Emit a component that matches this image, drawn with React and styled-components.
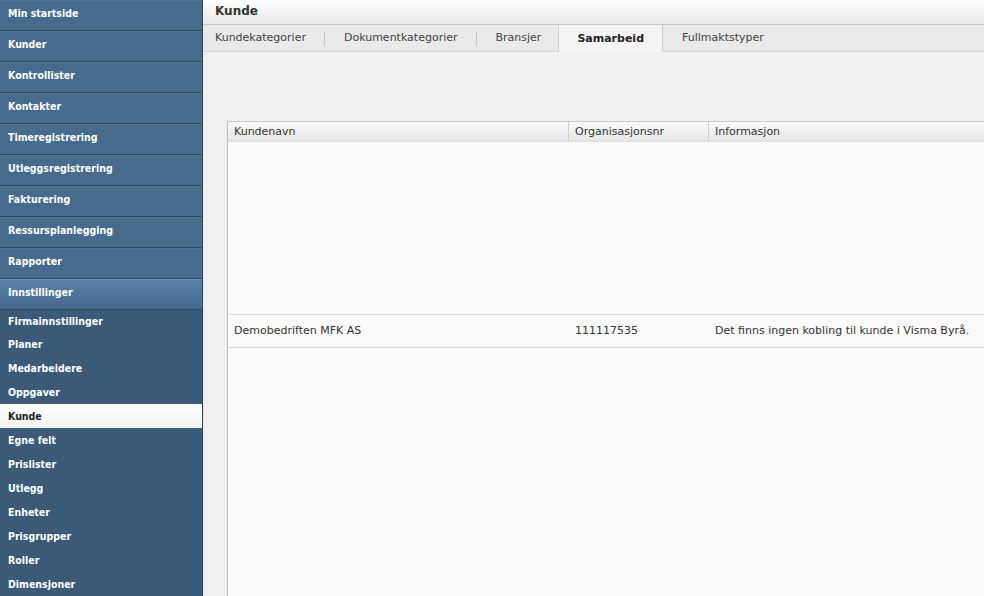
import styled, { createGlobalStyle } from "styled-components"

const GlobalStyle = createGlobalStyle`
  html, body {
    margin: 0;
    padding: 0;
    height: 100%;
    overflow: hidden;
  }
  #root {
    height: 100%;
  }
  * {
    box-sizing: border-box;
  }
`

const mainMenu = [
  "Min startside",
  "Kunder",
  "Kontrollister",
  "Kontakter",
  "Timeregistrering",
  "Utleggsregistrering",
  "Fakturering",
  "Ressursplanlegging",
  "Rapporter",
]

const subMenu = [
  "Firmainnstillinger",
  "Planer",
  "Medarbeidere",
  "Oppgaver",
  "Kunde",
  "Egne felt",
  "Prislister",
  "Utlegg",
  "Enheter",
  "Prisgrupper",
  "Roller",
  "Dimensjoner",
]

const tabs = ["Kundekategorier", "Dokumentkategorier", "Bransjer", "Samarbeid", "Fullmaktstyper"]

export default function App() {
  return (
    <>
      <GlobalStyle />
      <Page>
        <Sidebar>
          {mainMenu.map((item) => (
            <MenuItem key={item}>{item}</MenuItem>
          ))}
          <MenuItem $open>Innstillinger</MenuItem>
          <SubMenu>
            {subMenu.map((item) => (
              <SubItem key={item} $active={item === "Kunde"}>{item}</SubItem>
            ))}
          </SubMenu>
        </Sidebar>
        <Main>
          <TitleBar>Kunde</TitleBar>
          <TabBar>
            {tabs.map((tab, i) => (
              <Tab
                key={tab}
                $active={tab === "Samarbeid"}
                $divider={i < 2}
              >
                {tab}
              </Tab>
            ))}
          </TabBar>
          <Content>
            <Grid>
              <GridHead>
                <HeadCell $w={341}>Kundenavn</HeadCell>
                <HeadCell $w={140}>Organisasjonsnr</HeadCell>
                <HeadCell $last>Informasjon</HeadCell>
              </GridHead>
              <GridBody>
                <EmptySpace />
                <Row>
                  <Cell $w={341}>Demobedriften MFK AS</Cell>
                  <Cell $w={140}>111117535</Cell>
                  <Cell>Det finns ingen kobling til kunde i Visma Byrå.</Cell>
                </Row>
              </GridBody>
            </Grid>
          </Content>
        </Main>
      </Page>
    </>
  )
}

const Page = styled.div`
  display: flex;
  width: 984px;
  height: 596px;
  background: #f0f0f0;
`

const Sidebar = styled.nav`
  width: 203px;
  flex-shrink: 0;
  display: flex;
  flex-direction: column;
  background: #3b5a77;
  border-right: 1px solid #2c4459;
  box-shadow: 1px 0 0 #dfe8ef;
  font-family: "DejaVu Sans Condensed", "DejaVu Sans", sans-serif;
  font-weight: bold;
  font-size: 10.5px;
  color: #ffffff;
  overflow: hidden;
`

const MenuItem = styled.div`
  height: 31px;
  flex-shrink: 0;
  display: flex;
  align-items: center;
  padding: 0 8px 6px;
  background: ${(p) =>
    p.$open
      ? "linear-gradient(#5a80a6, #4d7398 60%, #46698c)"
      : "#476b8d"};
  border-top: 1px solid ${(p) => (p.$open ? "#6e91b3" : "#4f7496")};
  border-bottom: 1px solid #2f4a63;
`

const SubMenu = styled.div`
  display: flex;
  flex-direction: column;
`

const SubItem = styled.div`
  height: 24px;
  flex-shrink: 0;
  display: flex;
  align-items: center;
  padding: 0 8px;
  background: ${(p) => (p.$active ? "linear-gradient(#ffffff, #f2f2f2)" : "transparent")};
  color: ${(p) => (p.$active ? "#222222" : "#ffffff")};
  &:first-child {
    height: 22px;
  }
`

const Main = styled.main`
  flex: 1;
  display: flex;
  flex-direction: column;
  min-width: 0;
  font-family: "DejaVu Sans", Verdana, sans-serif;
  font-size: 11px;
  color: #333333;
`

const TitleBar = styled.div`
  height: 24px;
  flex-shrink: 0;
  display: flex;
  align-items: center;
  padding: 0 0 2px 12px;
  background: linear-gradient(#fdfdfd, #e9e9e9);
  font-weight: bold;
  font-size: 12px;
  color: #333333;
`

const TabBar = styled.div`
  height: 28px;
  flex-shrink: 0;
  display: flex;
  align-items: stretch;
  background: #e9e9ea;
  border-top: 1px solid #c8c8c8;
  border-bottom: 1px solid #d8d8d8;
`

const Tab = styled.div`
  position: relative;
  display: flex;
  align-items: center;
  padding: 0 18px 1px;
  color: ${(p) => (p.$active ? "#222222" : "#444444")};
  font-weight: ${(p) => (p.$active ? "bold" : "normal")};
  background: ${(p) => (p.$active ? "#f4f4f4" : "transparent")};
  border-left: 1px solid ${(p) => (p.$active ? "#d0d0d0" : "transparent")};
  border-right: 1px solid ${(p) => (p.$active ? "#cfcfcf" : "transparent")};
  margin-bottom: ${(p) => (p.$active ? "-1px" : "0")};
  &:first-child {
    padding-left: 11px;
  }
  &:nth-child(3) {
    padding-right: 16px;
  }
  &::after {
    content: "";
    display: ${(p) => (p.$divider ? "block" : "none")};
    position: absolute;
    right: -1px;
    top: 7px;
    height: 14px;
    border-right: 1px solid #c4c4c4;
  }
`

const Content = styled.div`
  flex: 1;
  display: flex;
  flex-direction: column;
  padding: 69px 0 0 24px;
  min-height: 0;
`

const Grid = styled.div`
  flex: 1;
  display: flex;
  flex-direction: column;
  background: #fafafa;
  border-top: 1px solid #c9c9c9;
  border-left: 1px solid #bdbdbd;
  min-height: 0;
`

const GridHead = styled.div`
  height: 20px;
  flex-shrink: 0;
  display: flex;
  background: linear-gradient(#fafafa, #e6e6e6);
  border-bottom: 1px solid #dedede;
`

const HeadCell = styled.div`
  width: ${(p) => (p.$w ? `${p.$w}px` : "auto")};
  flex: ${(p) => (p.$w ? "none" : "1")};
  display: flex;
  align-items: center;
  padding: 0 6px 1px;
  border-right: ${(p) => (p.$last ? "none" : "1px solid #d0d0d0")};
  color: #333333;
  white-space: nowrap;
`

const GridBody = styled.div`
  display: flex;
  flex-direction: column;
`

const EmptySpace = styled.div`
  height: 172px;
`

const Row = styled.div`
  height: 34px;
  display: flex;
  align-items: center;
  border-top: 1px solid #dcdcdc;
  border-bottom: 1px solid #dcdcdc;
`

const Cell = styled.div`
  width: ${(p) => (p.$w ? `${p.$w}px` : "auto")};
  flex: ${(p) => (p.$w ? "none" : "1")};
  padding: 0 6px 1px;
  white-space: nowrap;
  color: #333333;
`
